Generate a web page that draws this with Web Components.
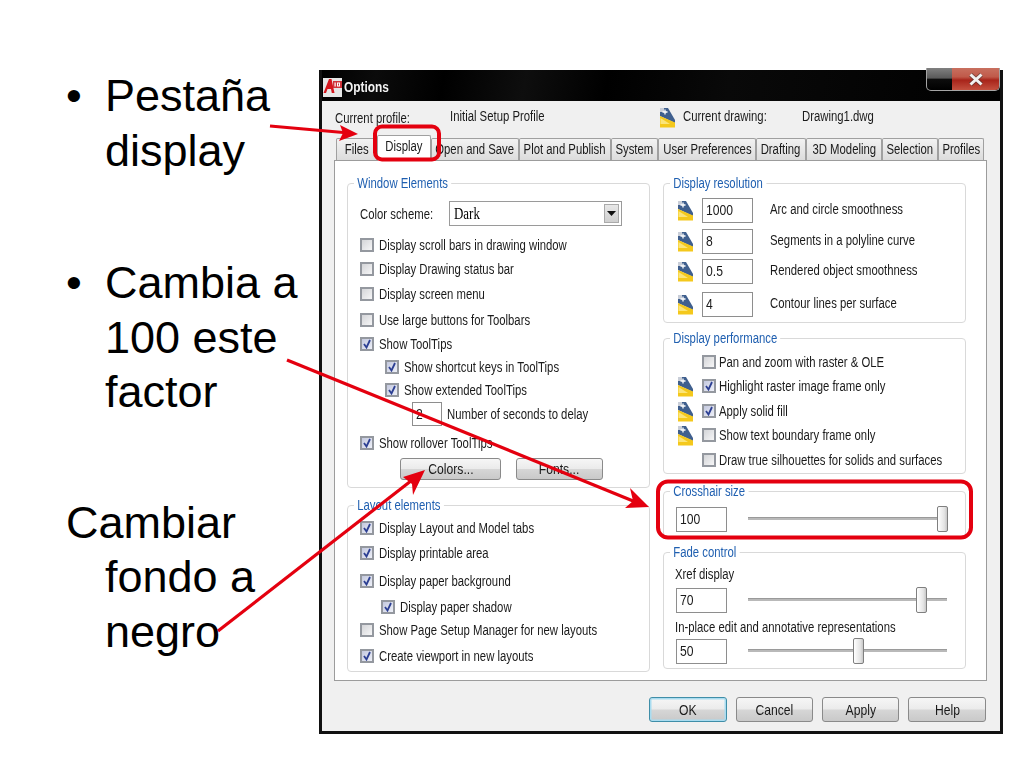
<!DOCTYPE html>
<html lang="en"><head><meta charset="utf-8"><title>Options</title>
<style>
html,body{margin:0;padding:0;background:#fff;width:1024px;height:768px;overflow:hidden}
</style></head><body>
<slide-page>
  <bullet-list slot="notes">
    <bullet-item style="margin-top:69px">Pestaña display</bullet-item>
    <bullet-item style="margin-top:78px">Cambia a 100 este factor</bullet-item>
    <bullet-item plain style="margin-top:76px">Cambiar fondo a negro</bullet-item>
  </bullet-list>
  <options-dialog slot="dialog"></options-dialog>
</slide-page>
<script>
const FONT='"Liberation Sans",Arial,sans-serif';
const NARROW='.t{display:inline-block;transform:scaleX(.81);transform-origin:0 50%;white-space:nowrap}';
const NARROWC='.t{display:inline-block;transform:scaleX(.81);transform-origin:50% 50%;white-space:nowrap;flex:none}';
const def=(n,css,html)=>{
  class C extends HTMLElement{
    constructor(){super();const r=this.attachShadow({mode:'open'});r.innerHTML='<style>'+css+'</style>'+(typeof html==='function'?html(this):html)}
  }
  customElements.define(n,C);
};
def('slide-page',`:host{display:flex;width:1024px;height:768px;position:relative;background:#fff}
 .l{width:319px;flex:none}.r{flex:none;margin-top:70px}
 svg{position:absolute;left:0;top:0;pointer-events:none}`,
`<div class="l"><slot name="notes"></slot></div><div class="r"><slot name="dialog"></slot></div>
 <svg width="1024" height="768" fill="none" stroke="#e4000f">
  <rect x="375" y="126.500" width="64" height="33" rx="7" stroke-width="4"/>
  <rect x="658" y="481.500" width="313" height="56" rx="10" stroke-width="4"/>
  <path d="M270 126 L349 133" stroke-width="3.200"/><path d="M358 134 L340 125 L343 133 L339 141Z" fill="#e4000f" stroke="none"/>
  <path d="M287 360 L638 503" stroke-width="3.200"/><path d="M649 507 L630 488 L633 501 L625 508Z" fill="#e4000f" stroke="none"/>
  <path d="M218 631 L416 477" stroke-width="3.200"/><path d="M425 470 L403 477 L412 484 L413 495Z" fill="#e4000f" stroke="none"/>
 </svg>`);
def('bullet-list',`:host{display:block;font:45px/54.500px "Liberation Sans",Arial,sans-serif;color:#000;padding-left:66px}`,`<slot></slot>`);
def('bullet-item',`:host{display:block;position:relative;padding-left:39px;width:200px}
 :host([plain]){text-indent:-39px}
 b{font-weight:400;position:absolute;left:0;top:0}
 :host([plain]) b{display:none}`,`<b>•</b><slot></slot>`);

def('acad-icon',`:host{display:block;width:17px;height:21px;flex:none}svg{display:block}`,
`<svg width="17" height="21" viewBox="0 0 17 21"><path d="M1 1 H9 L16 13 V16 L1 9Z" fill="#3f5f8e"/><path d="M1 1 H5 V5 H1Z" fill="#c9ced8"/><path d="M1 9 L16 15.500 V20.500 H1Z" fill="#f4c81c"/><path d="M1.500 11 L11 17 L1.500 17Z" fill="#fbe57a"/><path d="M6 2.500v5M3.500 5h5" stroke="#fff" stroke-width="1.300"/></svg>`);

def('win-text',`:host{display:inline-block;font:14px/16px ${FONT};color:#1a1a1a;white-space:nowrap}${NARROW}`,`<span class="t"><slot></slot></span>`);

def('check-row',`:host{display:flex;align-items:center;height:20px;font:14px/16px ${FONT};color:#1a1a1a;white-space:nowrap}
 i{width:10px;height:10px;border:2px solid #94989f;background:linear-gradient(135deg,#d4d5d8,#f6f6f7);margin-right:4.500px;flex:none;display:block;position:relative}
 :host([tight]) i{margin-right:2.500px}
 svg{position:absolute;left:0;top:0;display:none}
 :host([checked]) svg{display:block}
 :host([checked]) i{background:linear-gradient(135deg,#c3c8de,#eef0f8)}${NARROW}`,
`<i><svg width="10" height="10" viewBox="0 0 10 10"><path d="M2 5 L4.500 8.500 L8 1" fill="none" stroke="#2c3f93" stroke-width="1.800"/></svg></i><span class="t"><slot></slot></span>`);

def('text-box',`:host{display:block;box-sizing:border-box;height:25px;width:51px;border:1.500px solid #8e8e8e;background:#fff;font:15px/22px ${FONT};color:#1a1a1a;padding-left:3px;flex:none}${NARROW}`,`<span class="t"><slot></slot></span>`);

def('push-btn',`:host{display:flex;align-items:center;justify-content:center;box-sizing:border-box;height:25px;border:1.500px solid #8a8a8a;border-radius:3px;background:linear-gradient(#f6f6f6 0,#ebebeb 48%,#d6d6d6 52%,#c9c9c9 100%);font:15px/20px ${FONT};color:#1a1a1a;flex:none}
 :host([default]){border-color:#3f8ea8;box-shadow:inset 0 0 0 1.500px #a9dcf0}${NARROWC}`,`<span class="t"><slot></slot></span>`);

def('track-slider',`:host{display:block;position:relative;height:26px;flex:none;width:199px}
 s{position:absolute;left:0;right:0;top:11px;height:3px;background:#b9b9b9;border-top:1px solid #9a9a9a;box-sizing:border-box}
 u{position:absolute;top:0;width:11px;height:26px;box-sizing:border-box;border:1.500px solid #7f7f7f;border-radius:2px;background:linear-gradient(90deg,#fff,#e4e4e4 70%,#c8c8c8)}`,
(h)=>`<s></s><u style="left:${h.getAttribute('at')}px"></u>`);

def('group-box',`:host{display:block;position:relative;box-sizing:border-box;border:1px solid #d9d9d9;border-radius:4px;background:#fff}
 b{position:absolute;left:6px;top:-9px;padding:0 4px;background:#fff;font:400 14px/16px ${FONT};color:#1f5fb0;white-space:nowrap;transform:scaleX(.81);transform-origin:0 50%}`,
(h)=>`<b>${h.getAttribute('label')}</b><slot></slot>`);

def('tab-item',`:host{display:flex;align-items:center;justify-content:center;box-sizing:border-box;height:22px;margin-top:3px;padding-bottom:2px;border:1px solid #a0a0a0;border-bottom:0;background:linear-gradient(#f2f2f2,#dcdcdc);font:14px/18px ${FONT};color:#1a1a1a;white-space:nowrap;flex:none;border-radius:2px 2px 0 0}
 :host([active]){height:26px;margin-top:0;background:#fff;position:relative;z-index:1;padding-bottom:5px}${NARROWC}`,`<span class="t"><slot></slot></span>`);

def('title-bar',`:host{display:flex;align-items:center;height:31px;box-sizing:border-box;background:linear-gradient(100deg,#000 0,#0b0b0b 8%,#000 18%,#0e0e0e 30%,#000 42%,#090909 60%,#000 100%);color:#f2f2f2;font:700 14px "Liberation Sans",Arial,sans-serif;padding:3px 0 0 1px;position:relative}
 .a{width:19px;height:19px;background:#e6e6e6;position:relative;overflow:hidden;margin-right:2px;flex:none}
 .a svg{display:block}
 .n{display:inline-block;transform:scaleX(.85);transform-origin:0 50%}
 .x{position:absolute;left:604px;top:-2px;width:74px;height:23px;border:1px solid #a5a5a5;border-top:0;border-radius:0 0 5px 5px;box-sizing:border-box;display:flex;overflow:hidden;background:linear-gradient(#808080,#5a5a5a 45%,#0d0d0d 52%,#000)}
 .x span{width:25px;flex:none}.x .red{flex:1;background:linear-gradient(#c8705f,#c05a4a 40%,#a8241a 55%,#c4503f);display:flex;align-items:center;justify-content:center}`,
`<div class="a"><svg width="19" height="19"><path d="M0.500 15 L6 1 L8.500 1 L11.500 15 L8.800 15 L8 11 L4.500 11 L3 15Z" fill="#d5161d"/><rect x="10" y="3" width="9" height="7" fill="#d0343a"/><rect x="11.500" y="4.500" width="1.200" height="4" fill="#fff"/><rect x="14" y="4.500" width="3" height="4" fill="#fff"/><rect x="15" y="5.500" width="1" height="2" fill="#d0343a"/></svg></div><span class="n">Options</span>
 <div class="x"><span></span><div class="red"><svg width="16" height="13"><path d="M2.500 1.500 L13.500 11.500 M13.500 1.500 L2.500 11.500" stroke="#333" stroke-opacity=".5" stroke-width="4.500"/><path d="M2.500 1.500 L13.500 11.500 M13.500 1.500 L2.500 11.500" stroke="#f1f1f1" stroke-width="3"/></svg></div></div>`);

def('options-dialog',`:host{display:block;width:684px;height:664px;box-sizing:border-box;border:1.500px solid #111;border-top:0;border-left-width:3px;border-right-width:3px;border-bottom-width:3px;background:#f0f0f0;filter:blur(.3px)}
 .prof{height:34px;display:flex;font:14px/16px ${FONT};color:#1a1a1a;position:relative}
 .prof win-text{margin-top:7px}
 .tabs{display:flex;padding-left:14px;height:26px;position:relative;z-index:1}
 .page{box-sizing:border-box;margin-left:12px;width:653px;height:521px;border:1px solid #9c9c9c;background:#fff;display:flex;padding:22px 0 0 12px;gap:13px;margin-top:-1px}
 .col{width:303px;flex:none}
 .foot{box-sizing:border-box;height:51px;display:flex;gap:9px;padding:16px 0 0 327px}
 .row{display:flex;align-items:center}
 .pair{display:flex;gap:15px;margin:5px 0 0 40px}
 .res{display:flex;align-items:center;padding-left:13px}
 .res acad-icon{margin-right:8px}.res win-text{margin:0 0 4px 17px}
 .perf{display:flex;align-items:center;height:20px;padding-left:13px;margin-top:5px}
 .perf acad-icon{margin-right:8px}.perf .sp{width:25px;flex:none}
 .sl{display:flex;align-items:center;padding-left:12px;gap:21px}
 .dark{display:inline-block;transform:scaleX(.81);transform-origin:0 50%}`,
`<title-bar></title-bar>
<div class="prof">
  <win-text style="margin-left:13px;width:115px;margin-top:9px">Current profile:</win-text>
  <win-text style="width:209px">Initial Setup Profile</win-text>
  <acad-icon style="margin-top:6px;margin-right:7px"></acad-icon>
  <win-text style="width:119px">Current drawing:</win-text>
  <win-text>Drawing1.dwg</win-text>
</div>
<div class="tabs">
  <tab-item style="width:41px">Files</tab-item>
  <tab-item active style="width:54px">Display</tab-item>
  <tab-item style="width:88px">Open and Save</tab-item>
  <tab-item style="width:92px">Plot and Publish</tab-item>
  <tab-item style="width:47px">System</tab-item>
  <tab-item style="width:98px">User Preferences</tab-item>
  <tab-item style="width:50px">Drafting</tab-item>
  <tab-item style="width:76px">3D Modeling</tab-item>
  <tab-item style="width:56px">Selection</tab-item>
  <tab-item style="width:46px">Profiles</tab-item>
</div>
<div class="page">
  <div class="col">
    <group-box label="Window Elements" style="height:305px;padding:17px 0 0 12px">
      <div class="row" style="height:25px"><win-text style="width:89px">Color scheme:</win-text>
        <div style="box-sizing:border-box;width:173px;height:25px;border:1.500px solid #9a9a9a;display:flex;justify-content:space-between;align-items:center;padding:0 2px 0 4px;font:14px ${FONT};color:#1a1a1a"><span class="dark">Dark</span>
          <span style="width:15px;height:19px;background:linear-gradient(#e8e8e8,#cfcfcf);border:1px solid #aaa;box-sizing:border-box;display:flex;align-items:center;justify-content:center"><svg width="9" height="5"><path d="M0 0h9L4.500 5z" fill="#111"/></svg></span></div></div>
      <check-row style="margin-top:9px">Display scroll bars in drawing window</check-row>
      <check-row style="margin-top:4px">Display Drawing status bar</check-row>
      <check-row style="margin-top:5px">Display screen menu</check-row>
      <check-row style="margin-top:6px">Use large buttons for Toolbars</check-row>
      <check-row checked style="margin-top:4px">Show ToolTips</check-row>
      <check-row checked style="margin-top:3px;margin-left:25px">Show shortcut keys in ToolTips</check-row>
      <check-row checked style="margin-top:3px;margin-left:25px">Show extended ToolTips</check-row>
      <div class="row" style="margin:2px 0 0 52px;height:24px"><text-box style="width:30px;height:24px">2</text-box><win-text style="margin-left:5px">Number of seconds to delay</win-text></div>
      <check-row checked style="margin-top:7px">Show rollover ToolTips</check-row>
      <div class="pair"><push-btn style="width:101px;height:22px">Colors...</push-btn><push-btn style="width:87px;height:22px">Fonts...</push-btn></div>
    </group-box>
    <group-box label="Layout elements" style="height:167px;margin-top:17px;padding:12px 0 0 12px">
      <check-row checked>Display Layout and Model tabs</check-row>
      <check-row checked style="margin-top:5px">Display printable area</check-row>
      <check-row checked style="margin-top:8px">Display paper background</check-row>
      <check-row checked style="margin-top:6px;margin-left:21px">Display paper shadow</check-row>
      <check-row style="margin-top:3px">Show Page Setup Manager for new layouts</check-row>
      <check-row checked style="margin-top:6px">Create viewport in new layouts</check-row>
    </group-box>
  </div>
  <div class="col">
    <group-box label="Display resolution" style="height:140px;padding-top:14px">
      <div class="res"><acad-icon></acad-icon><text-box>1000</text-box><win-text>Arc and circle smoothness</win-text></div>
      <div class="res" style="margin-top:6px"><acad-icon></acad-icon><text-box>8</text-box><win-text>Segments in a polyline curve</win-text></div>
      <div class="res" style="margin-top:5px"><acad-icon></acad-icon><text-box>0.5</text-box><win-text>Rendered object smoothness</win-text></div>
      <div class="res" style="margin-top:8px"><acad-icon></acad-icon><text-box>4</text-box><win-text>Contour lines per surface</win-text></div>
    </group-box>
    <group-box label="Display performance" style="height:136px;margin-top:15px;padding-top:9px">
      <div class="perf" style="margin-top:4px"><span class="sp"></span><check-row tight>Pan and zoom with raster &amp; OLE</check-row></div>
      <div class="perf" style="margin-top:4px"><acad-icon></acad-icon><check-row tight checked>Highlight raster image frame only</check-row></div>
      <div class="perf"><acad-icon></acad-icon><check-row tight checked>Apply solid fill</check-row></div>
      <div class="perf" style="margin-top:4px"><acad-icon></acad-icon><check-row tight>Show text boundary frame only</check-row></div>
      <div class="perf"><span class="sp"></span><check-row tight>Draw true silhouettes for solids and surfaces</check-row></div>
    </group-box>
    <group-box label="Crosshair size" style="height:46px;margin-top:17px;padding-top:14px">
      <div class="sl"><text-box>100</text-box><track-slider at="189"></track-slider></div>
    </group-box>
    <group-box label="Fade control" style="height:117px;margin-top:15px;padding:13px 0 0 0">
      <win-text style="display:block;margin-left:11px">Xref display</win-text>
      <div class="sl" style="margin-top:5px"><text-box>70</text-box><track-slider at="168"></track-slider></div>
      <win-text style="display:block;margin:6px 0 0 11px">In-place edit and annotative representations</win-text>
      <div class="sl" style="margin-top:3px"><text-box>50</text-box><track-slider at="105"></track-slider></div>
    </group-box>
  </div>
</div>
<div class="foot">
  <push-btn default style="width:78px">OK</push-btn><push-btn style="width:77px">Cancel</push-btn><push-btn style="width:77px">Apply</push-btn><push-btn style="width:78px">Help</push-btn>
</div>`);
</script>
</body></html>
